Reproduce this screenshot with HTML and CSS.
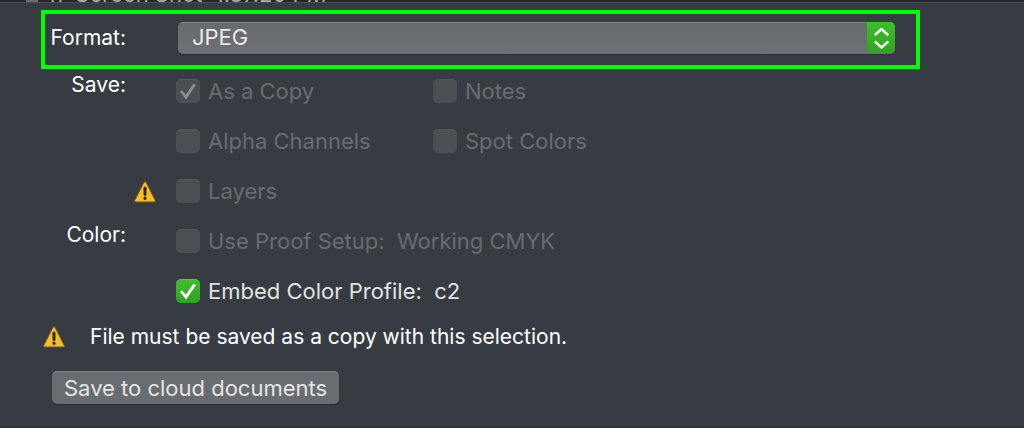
FILE: index.html
```
<!doctype html>
<html lang="en">
	<head>
		<title>Save As</title>
		<meta charset="utf-8">
		<link rel="stylesheet" href="styles.css">
	</head>
	<body>
		<div class="filelist">
			<span class="thumb"></span>
			<span class="filename">n &nbsp;Screen Shot &nbsp;1.37.20 PM</span>
		</div>
		<form class="dialog">
			<div class="format">
				<label class="name" for="format">Format:</label>
				<div class="popup">
					<select id="format">
						<option>JPEG</option>
						<option>PNG</option>
						<option>TIFF</option>
					</select>
					<svg class="arrows" viewBox="0 0 28 32">
						<path d="M8.5 12.5L14.5 7L20.5 12.5M8.5 20L14.5 25.5L20.5 20" />
					</svg>
				</div>
			</div>
			<div class="row">
				<span class="name">Save:</span>
				<div class="options">
					<label class="option"><input type="checkbox" checked disabled>As a Copy</label>
					<label class="option"><input type="checkbox" disabled>Notes</label>
				</div>
			</div>
			<div class="row">
				<span class="name"></span>
				<div class="options">
					<label class="option"><input type="checkbox" disabled>Alpha Channels</label>
					<label class="option"><input type="checkbox" disabled>Spot Colors</label>
				</div>
			</div>
			<div class="row alert">
				<svg class="warning" viewBox="0 0 22 22">
					<path class="sign" d="M9.8 1.5Q11 0 12.2 1.5L21.3 19.5Q21.7 21 20.3 21H1.7Q0.3 21 0.7 19.5Z" />
					<path class="mark" d="M11 7V13.5M11 17V17.4" />
				</svg>
				<label class="option"><input type="checkbox" disabled>Layers</label>
			</div>
			<div class="row">
				<span class="name">Color:</span>
				<label class="option"><input type="checkbox" disabled>Use Proof Setup:&nbsp; Working CMYK</label>
			</div>
			<div class="row">
				<span class="name"></span>
				<label class="option"><input type="checkbox" checked>Embed Color Profile:&nbsp; c2</label>
			</div>
			<div class="notice">
				<svg class="warning" viewBox="0 0 22 22">
					<path class="sign" d="M9.8 1.5Q11 0 12.2 1.5L21.3 19.5Q21.7 21 20.3 21H1.7Q0.3 21 0.7 19.5Z" />
					<path class="mark" d="M11 7V13.5M11 17V17.4" />
				</svg>
				<p>File must be saved as a copy with this selection.</p>
			</div>
			<button class="cloud" type="button">Save to cloud documents</button>
		</form>
	</body>
</html>
```
FILE: styles.css
```
* {
	box-sizing: border-box;
	margin: 0;
	padding: 0;
}
body {
	min-height: 100vh;
	display: flex;
	flex-direction: column;
	background-color: #373c42;
	color: #fff;
	font-family: Inter, "Liberation Sans", sans-serif;
	font-size: 22px;
	line-height: 24px;
}

/* bottom edge of the file browser above the sheet */
.filelist {
	height: 3px;
	padding-left: 26px;
	display: flex;
	align-items: flex-end;
	gap: 12px;
	overflow: hidden;
	background-color: #24272c;
	border-bottom: 1px solid #4a4f57;
	color: #a9abae;
}
.thumb {
	width: 12px;
	height: 2px;
	background-color: #756a6b;
}
.filename {
	height: 20px;
}

.dialog {
	flex-grow: 1;
	display: flex;
	flex-direction: column;
	padding-top: 7px;
	border-bottom: 1px solid #2c2c35;
}
.name {
	text-align: right;
	font-size: 21px;
}
.format {
	margin: 0 104px 10px 41px;
	padding: 8px 21px 11px 0;
	display: grid;
	grid-template-columns: 81px 1fr;
	column-gap: 52px;
	align-items: center;
	border: 4px solid #0f0;
}
.popup {
	display: grid;
	grid-template-columns: 1fr 28px;
	border-radius: 5px;
	overflow: hidden;
	background-image: linear-gradient(#676a6e, #6d7074);
	box-shadow: 0 1px 1px #292c30;
}
.popup select {
	grid-area: 1 / 1 / 2 / 3;
	height: 32px;
	padding: 0 40px 3px 14px;
	appearance: none;
	background: none;
	border: 0;
	border-top: 1px solid #808286;
	color: #e9eaea;
	font: inherit;
}
.arrows {
	grid-area: 1 / 2 / 2 / 3;
	width: 28px;
	height: 32px;
	background-image: linear-gradient(#3fbd2c, #2fa31f);
	fill: none;
	stroke: #eefbea;
	stroke-width: 2.5;
	stroke-linecap: round;
	stroke-linejoin: round;
	pointer-events: none;
}

.row {
	display: grid;
	grid-template-columns: 126px 1fr;
	column-gap: 50px;
	height: 24px;
	margin-bottom: 26px;
}
.row .name {
	margin-top: -6px;
}
.alert {
	grid-template-columns: 156px 1fr;
	column-gap: 20px;
}
.alert .warning {
	justify-self: end;
	align-self: end;
}
.options {
	display: grid;
	grid-template-columns: 257px 1fr;
}
.option {
	display: flex;
	align-items: center;
	gap: 8px;
	color: #e1e2e3;
}
.option:has(:disabled) {
	color: #686c70;
}
.option input {
	appearance: none;
	width: 24px;
	height: 24px;
	border-radius: 5px;
	background-color: #4b4f53;
	border-top: 1px solid #54585b;
}
.option input:checked {
	display: grid;
	place-items: center;
	border-top-color: #55c944;
	background-image: linear-gradient(#3fbd2c, #2fa31f);
}
.option input:checked:disabled {
	border-top-color: #5a5d61;
	background-image: none;
}
.option input:checked::before {
	content: "";
	width: 16px;
	height: 16px;
	background-color: #fff;
	clip-path: polygon(0 52%, 12% 42%, 36% 70%, 84% 0, 100% 9%, 38% 100%);
}
.option input:checked:disabled::before {
	background-color: #8c8e91;
}

.warning {
	width: 22px;
	height: 22px;
}
.sign {
	fill: #f5bf25;
	stroke: #6b5521;
}
.mark {
	stroke: #302b20;
	stroke-width: 3;
	stroke-linecap: round;
}

.notice {
	margin: -6px 0 20px 43px;
	display: flex;
	align-items: center;
	gap: 25px;
	font-size: 21px;
	line-height: 28px;
}
.cloud {
	align-self: flex-start;
	margin-left: 52px;
	padding: 0 12px;
	height: 33px;
	border: 0;
	border-top: 1px solid #808286;
	border-radius: 5px;
	background-color: #696c70;
	box-shadow: 0 1px 1px #292c30;
	color: #e4e5e6;
	font: inherit;
}
```
